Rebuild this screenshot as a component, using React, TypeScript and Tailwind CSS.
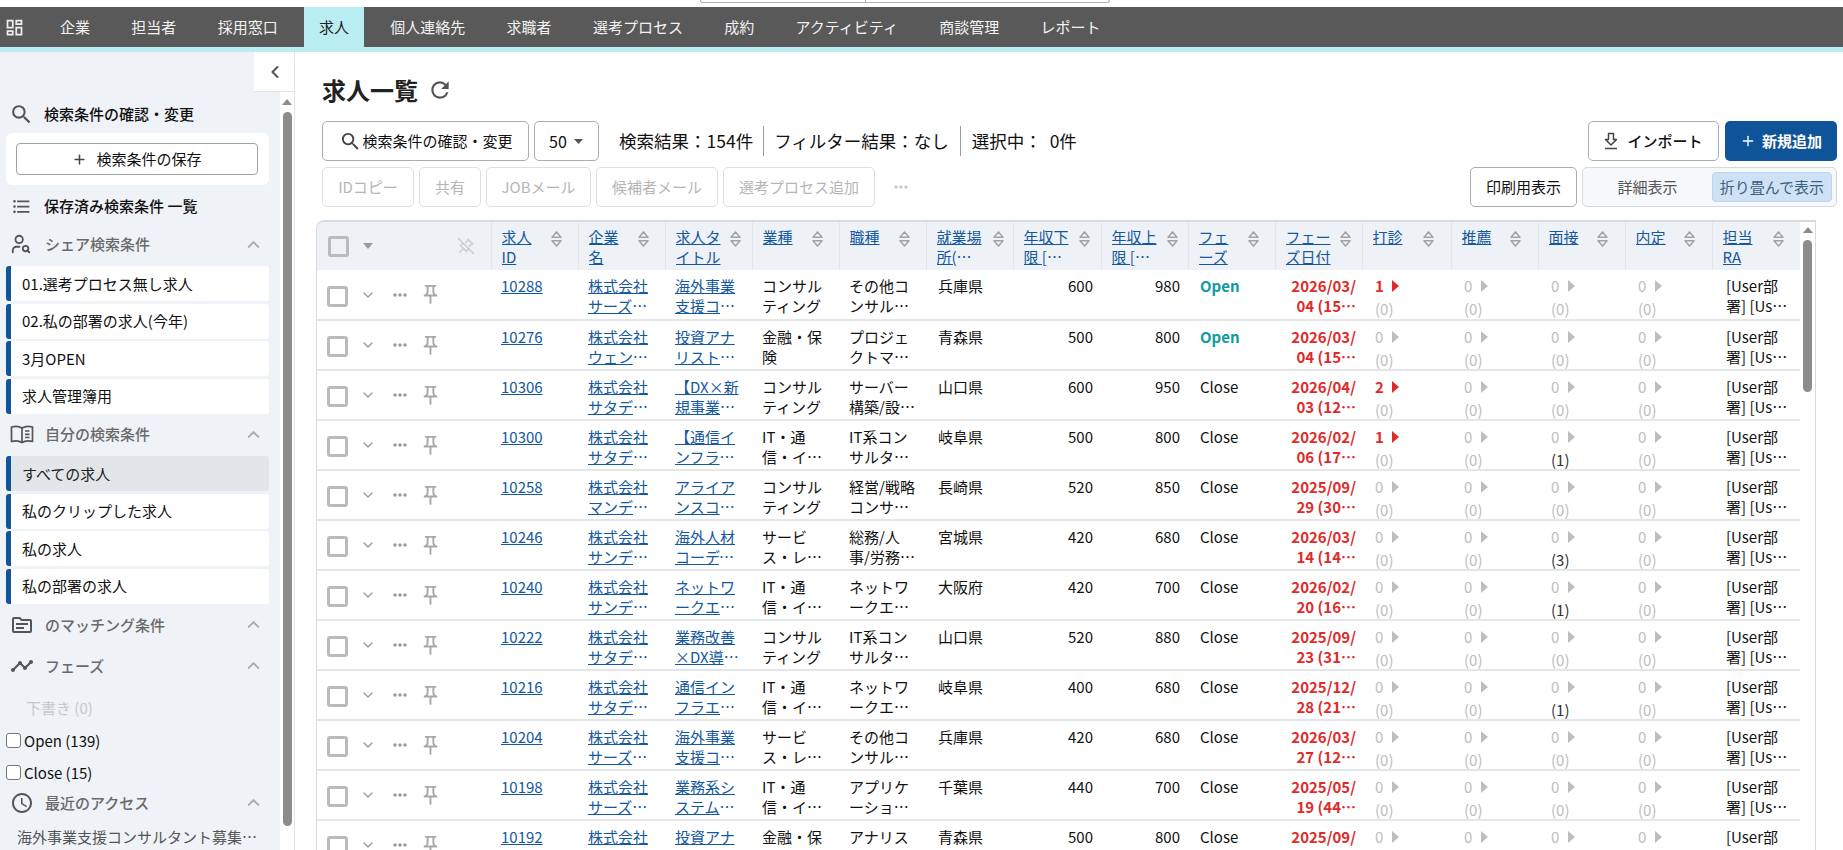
import { Plus, ChevronUp, ChevronDown, ChevronLeft, UserSearch } from "lucide-react";
import { MdOutlineDashboard, MdOutlineSource, MdOutlineTimeline, MdOutlineAccessTime, MdRefresh, MdOutlinePushPin, MdMoreHoriz, MdFormatListBulleted, MdSearch } from "react-icons/md";
import { TbPinnedOff } from "react-icons/tb";

const navItems = ["企業", "担当者", "採用窓口", "求人", "個人連絡先", "求職者", "選考プロセス", "成約", "アクティビティ", "商談管理", "レポート"];

type Row = { id: string; co: string; title: string; ind: string; job: string; pref: string; min: string; max: string; phase: string; date: string; da: string; men: string };

const rows: Row[] = [
  { id: "10288", co: "株式会社サーズデイテクノロジー", title: "海外事業支援コンサルタント募集中", ind: "コンサルティング", job: "その他コンサルタント職", pref: "兵庫県", min: "600", max: "980", phase: "Open", date: "2026/03/04 (15日前)", da: "1", men: "0" },
  { id: "10276", co: "株式会社ウェンズデイ総合研究所", title: "投資アナリスト候補の募集です", ind: "金融・保険", job: "プロジェクトマネージャー", pref: "青森県", min: "500", max: "800", phase: "Open", date: "2026/03/04 (15日前)", da: "0", men: "0" },
  { id: "10306", co: "株式会社サタデーデジタル研究所", title: "【DX×新規事業推進】担当者募集", ind: "コンサルティング", job: "サーバー構築/設計担当者", pref: "山口県", min: "600", max: "950", phase: "Close", date: "2026/04/03 (12日前)", da: "2", men: "0" },
  { id: "10300", co: "株式会社サタデーデジタル研究所", title: "【通信インフラ】設計担当者募集", ind: "IT・通信・インフラ業界", job: "IT系コンサルタント職種", pref: "岐阜県", min: "500", max: "800", phase: "Close", date: "2026/02/06 (17日前)", da: "1", men: "1" },
  { id: "10258", co: "株式会社マンデーデジタル研究所", title: "アライアンスコーディネーター", ind: "コンサルティング", job: "経営/戦略コンサルタント職", pref: "長崎県", min: "520", max: "850", phase: "Close", date: "2025/09/29 (30日前)", da: "0", men: "0" },
  { id: "10246", co: "株式会社サンデーデジタル研究所", title: "海外人材コーディネーター職種", ind: "サービス・レジャー業界", job: "総務/人事/労務担当者職", pref: "宮城県", min: "420", max: "680", phase: "Close", date: "2026/03/14 (14日前)", da: "0", men: "3" },
  { id: "10240", co: "株式会社サンデーデジタル研究所", title: "ネットワークエンジニア募集中", ind: "IT・通信・インフラ業界", job: "ネットワークエンジニア職", pref: "大阪府", min: "420", max: "700", phase: "Close", date: "2026/02/20 (16日前)", da: "0", men: "1" },
  { id: "10222", co: "株式会社サタデーデジタル研究所", title: "業務改善×DX導入コンサルタント", ind: "コンサルティング", job: "IT系コンサルタント職種", pref: "山口県", min: "520", max: "880", phase: "Close", date: "2025/09/23 (31日前)", da: "0", men: "0" },
  { id: "10216", co: "株式会社サタデーデジタル研究所", title: "通信インフラエンジニア募集中", ind: "IT・通信・インフラ業界", job: "ネットワークエンジニア職", pref: "岐阜県", min: "400", max: "680", phase: "Close", date: "2025/12/28 (21日前)", da: "0", men: "1" },
  { id: "10204", co: "株式会社サーズデイテクノロジー", title: "海外事業支援コンサルタント募集", ind: "サービス・レジャー業界", job: "その他コンサルタント職", pref: "兵庫県", min: "420", max: "680", phase: "Close", date: "2026/03/27 (12日前)", da: "0", men: "0" },
  { id: "10198", co: "株式会社サーズデイテクノロジー", title: "業務系システムエンジニア募集", ind: "IT・通信・インフラ業界", job: "アプリケーションエンジニア", pref: "千葉県", min: "440", max: "700", phase: "Close", date: "2025/05/19 (44日前)", da: "0", men: "0" },
  { id: "10192", co: "株式会社ウェンズデイ総合研究所", title: "投資アナリスト候補の募集です", ind: "金融・保険", job: "アナリスト候補の募集職", pref: "青森県", min: "500", max: "800", phase: "Close", date: "2025/09/10 (30日前)", da: "0", men: "0" },
];

const headers = [
  { t: "求人\nID", w: "w-[44px]", col: "w-[87px]" },
  { t: "企業名", w: "w-[44px]", col: "w-[87px]" },
  { t: "求人タイトル", w: "w-[49px]", col: "w-[87px]" },
  { t: "業種", w: "w-[44px]", col: "w-[87px]" },
  { t: "職種", w: "w-[44px]", col: "w-[87px]" },
  { t: "就業場所(都道府県)", w: "w-[49px] mr-[2px]", col: "w-[87px]" },
  { t: "年収下限 [万円]", w: "w-[50px]", col: "w-[88px]" },
  { t: "年収上限 [万円]", w: "w-[50px]", col: "w-[87px]" },
  { t: "フェーズ", w: "w-[44px]", col: "w-[87px]" },
  { t: "フェーズ日付", w: "w-[49px]", col: "w-[87px]" },
  { t: "打診", w: "w-[45px]", col: "w-[89px]" },
  { t: "推薦", w: "w-[43px]", col: "w-[87px]" },
  { t: "面接", w: "w-[43px]", col: "w-[87px]" },
  { t: "内定", w: "w-[43px]", col: "w-[87px]" },
  { t: "担当\nRA", w: "w-[45px]", col: "w-[88px]" },
];

function SortIcon() {
  return (
    <svg width="11" height="16" viewBox="0 0 11 16" fill="none" stroke="#a3a3a3" strokeWidth="1.5" className="shrink-0 mt-[4px]">
      <path d="M5.5 1 L10 6.3 H1 Z" strokeLinejoin="round" />
      <path d="M5.5 15 L10 9.7 H1 Z" strokeLinejoin="round" />
    </svg>
  );
}

function Tri({ cls }: { cls: string }) {
  return (
    <svg width="7" height="12" viewBox="0 0 7 12" className={cls}>
      <path d="M0 0 L7 6 L0 12 Z" fill="currentColor" />
    </svg>
  );
}

function Count({ n, sub = "0" }: { n: string; sub?: string }) {
  const hot = n !== "0";
  return (
    <td className="align-top pl-[13px] pt-[6px] border-b-2 border-[#e4e6e8]">
      <div className={hot ? "flex items-center h-[20px] text-[#e02a2a] font-bold" : "flex items-center h-[20px] text-[#bdbdbd]"}>
        <span className="w-[9px]">{n}</span>
        <Tri cls="ml-[8px]" />
      </div>
      <div className={sub !== "0" ? "mt-[3px] h-[18px] leading-[20px] text-[#333]" : "mt-[3px] h-[18px] leading-[20px] text-[#bdbdbd]"}>({sub})</div>
    </td>
  );
}

function Clamp({ children, link }: { children: string; link?: boolean }) {
  return (
    <div className={link ? "line-clamp-2 break-all text-[#14589f] underline" : "line-clamp-2 break-all"}>{children}</div>
  );
}

function SideItem({ label, active }: { label: string; active?: boolean }) {
  return (
    <div className={active ? "h-[35px] flex items-center pl-[11px] border-l-[5px] border-[#10549a] rounded-[3px] bg-[#e3e6e9] text-[#222]" : "h-[35px] flex items-center pl-[11px] border-l-[5px] border-[#10549a] rounded-[3px] bg-white text-[#111]"}>
      {label}
    </div>
  );
}

function SideHead({ icon, label, mt }: { icon: React.ReactNode; label: string; mt: string }) {
  return (
    <div className={`flex items-center h-[24px] pl-[10px] pr-[17px] text-[#6a6a6a] ${mt}`}>
      <span className="w-[25px] flex justify-start text-[#555]">{icon}</span>
      <span className="ml-[10px] flex-1 font-medium">{label}</span>
      <ChevronUp size={19} strokeWidth={2.4} className="text-[#a9a9a9]" />
    </div>
  );
}

function BookIcon() {
  return (
    <svg width="24" height="24" viewBox="0 0 24 24" fill="none" stroke="currentColor" strokeWidth="1.7" strokeLinejoin="round">
      <path d="M1.5 5 C5 4 9 4 12 6 C15 4 19 4 22.5 5 V19.5 C19 18.5 15 18.5 12 20.5 C9 18.5 5 18.5 1.5 19.5 Z" />
      <path d="M12 6 V20.5" />
      <path d="M15 9 H19.5 M15 12.3 H19.5 M15 15.5 H19.5" />
    </svg>
  );
}

export default function App() {
  return (
    <div lang="ja" className="h-[850px] w-[1843px] overflow-hidden bg-white flex flex-col text-[15px] leading-[20px] text-[#111] font-['Noto_Sans_CJK_JP','Noto_Sans',sans-serif]">
      <div className="h-[7px] shrink-0 pl-[700px]">
        <div className="w-[410px] h-[3px] border-x border-b border-[#aab2bb] rounded-b-lg flex">
          <div className="w-[165px] border-r border-[#aab2bb]" />
        </div>
      </div>

      <header className="h-[45px] shrink-0 flex bg-[#595959] border-b-[5px] border-[#b9edf1] text-[#f2f2f2]">
        <div className="w-[45px] pl-[4px] flex items-center"><MdOutlineDashboard size={21} className="text-[#eee]" /></div>
        <nav className="flex gap-[11.3px]">
          {navItems.map((n) =>
            n === "求人" ? (
              <div key={n} className="px-[15px] h-[45px] pb-[5px] flex items-center bg-[#b9edf1] text-[#222]">{n}</div>
            ) : (
              <div key={n} className="px-[15px] h-[40px] flex items-center">{n}</div>
            )
          )}
        </nav>
      </header>

      <div className="flex flex-1 min-h-0">
        <aside className="relative w-[295px] shrink-0 flex border-r border-[#e5e5e5]">
          <div className="w-[280px] bg-[#eff2f6] pt-[50px]">
            <div className="flex items-center h-[24px] pl-[9px] text-[#111] font-medium">
              <MdSearch size={25} className="text-[#555]" />
              <span className="ml-[10px]">検索条件の確認・変更</span>
            </div>
            <div className="mt-[7px] ml-[6px] w-[263px] h-[52px] bg-white rounded-[6px] pt-[10px] pl-[10px]">
              <div className="w-[242px] h-[32px] border border-[#9ea3a8] rounded-[4px] flex items-center justify-center text-[#111]">
                <Plus size={15} strokeWidth={2.4} className="text-[#444] mr-[9px]" />検索条件の保存
              </div>
            </div>
            <div className="flex items-center h-[24px] mt-[9px] pl-[11px] font-medium">
              <MdFormatListBulleted size={21} className="text-[#555]" />
              <span className="ml-[12px]">保存済み検索条件 一覧</span>
            </div>
            <SideHead mt="mt-[14px]" label="シェア検索条件" icon={<UserSearch size={22} />} />
            <div className="mt-[10px] ml-[6px] w-[263px] flex flex-col gap-[2.5px]">
              <SideItem label="01.選考プロセス無し求人" />
              <SideItem label="02.私の部署の求人(今年)" />
              <SideItem label="3月OPEN" />
              <SideItem label="求人管理簿用" />
            </div>
            <SideHead mt="mt-[8.5px]" label="自分の検索条件" icon={<BookIcon />} />
            <div className="mt-[10px] ml-[6px] w-[263px] flex flex-col gap-[2.5px]">
              <SideItem label="すべての求人" active />
              <SideItem label="私のクリップした求人" />
              <SideItem label="私の求人" />
              <SideItem label="私の部署の求人" />
            </div>
            <SideHead mt="mt-[9px]" label="のマッチング条件" icon={<MdOutlineSource size={24} />} />
            <SideHead mt="mt-[17px]" label="フェーズ" icon={<MdOutlineTimeline size={24} />} />
            <div className="mt-[20px] pl-[26px] text-[#c6c8ca]">下書き (0)</div>
            <div className="mt-[13px] flex items-center pl-[6px]">
              <span className="w-[15px] h-[15px] border border-[#777] rounded-[3px] bg-white mr-[3px]" />Open (139)
            </div>
            <div className="mt-[12px] flex items-center pl-[6px]">
              <span className="w-[15px] h-[15px] border border-[#777] rounded-[3px] bg-white mr-[3px]" />Close (15)
            </div>
            <SideHead mt="mt-[8px]" label="最近のアクセス" icon={<MdOutlineAccessTime size={24} />} />
            <div className="mt-[12px] pl-[17px] pr-[22px] truncate text-[#555]">海外事業支援コンサルタント募集中の求人</div>
          </div>
          <div className="w-[14px] bg-white pt-[47px] flex flex-col items-center">
            <svg width="10" height="6" viewBox="0 0 10 6"><path d="M5 0 L10 6 H0 Z" fill="#8c8c8c" /></svg>
            <div className="mt-[7px] w-[9px] h-[714px] rounded-[5px] bg-[#8c8c8c]" />
          </div>
          <div className="absolute top-0 right-0 w-[40px] h-[40px] pl-[1px] bg-white flex items-center justify-center border-b border-[#e5e5e5]">
            <ChevronLeft size={20} strokeWidth={2.5} className="text-[#555]" />
          </div>
        </aside>

        <main className="flex-1 min-w-0 flex flex-col">
          <div className="pl-[27px] pr-[6px]">
            <div className="h-[69px] flex items-center pt-[7px]">
              <h1 className="text-[24px] leading-[32px] font-bold text-[#222]">求人一覧</h1>
              <MdRefresh size={26} className="ml-[9px] text-[#555]" />
            </div>
            <div className="flex h-[40px] items-center">
              <div className="h-[40px] w-[207px] border border-[#a9aeb3] rounded-[5px] flex items-center justify-center text-[#111]">
                <MdSearch size={23} className="text-[#444] ml-[1px]" />検索条件の確認・変更
              </div>
              <div className="ml-[5px] h-[40px] w-[65px] border border-[#a9aeb3] rounded-[5px] flex items-center pl-[14px] text-[16px]">
                50
                <svg width="9" height="5" viewBox="0 0 9 5" className="ml-[7px]"><path d="M0 0 H9 L4.5 5 Z" fill="#555" /></svg>
              </div>
              <div className="ml-[20px] flex items-center text-[17.5px] text-[#111]">
                <span>検索結果：154件</span>
                <span className="mx-[10px] h-[30px] border-l border-[#999]" />
                <span>フィルター結果：なし</span>
                <span className="mx-[11px] h-[30px] border-l border-[#999]" />
                <span>選択中：&nbsp; 0件</span>
              </div>
              <div className="ml-auto flex gap-[6px]">
                <div className="w-[131px] h-[40px] border border-[#a9aeb3] rounded-[5px] flex items-center justify-center font-medium">
                  <svg width="14" height="18" viewBox="0 0 14 18" fill="none" stroke="#444" strokeWidth="1.5" className="mr-[9px]">
                    <path d="M4.5 1.5 H9.5 V7.5 H12.5 L7 13 L1.5 7.5 H4.5 Z" strokeLinejoin="round" />
                    <path d="M1 16.5 H13" />
                  </svg>
                  インポート
                </div>
                <div className="w-[112px] h-[40px] bg-[#0f5499] rounded-[5px] flex items-center justify-center text-white font-bold">
                  <Plus size={16} className="mr-[6px]" />新規追加
                </div>
              </div>
            </div>
            <div className="flex h-[40px] mt-[6px] items-center">
              {[
                { t: "IDコピー", w: "w-[92px]" },
                { t: "共有", w: "w-[62px]" },
                { t: "JOBメール", w: "w-[105px]" },
                { t: "候補者メール", w: "w-[122px]" },
                { t: "選考プロセス追加", w: "w-[152px]" },
              ].map((b) => (
                <div key={b.t} className={`${b.w} mr-[5px] h-[40px] border border-[#dde0e3] rounded-[5px] flex items-center justify-center text-[#b6b6b6]`}>{b.t}</div>
              ))}
              <MdMoreHoriz size={20} className="ml-[11px] text-[#c9c9c9]" />
              <div className="ml-auto flex gap-[5px]">
                <div className="w-[107px] h-[40px] border border-[#a9aeb3] rounded-[5px] flex items-center justify-center text-[#111]">印刷用表示</div>
                <div className="w-[255px] h-[40px] border border-[#d5d8dc] rounded-[5px] bg-[#f7f8fa] flex items-center pr-[4px]">
                  <div className="flex-1 text-center text-[#555]">詳細表示</div>
                  <div className="w-[120px] h-[30px] rounded-[4px] bg-[#cfe2f5] border border-[#b9d5ef] flex items-center justify-center text-[#3e5f80]">折り畳んで表示</div>
                </div>
              </div>
            </div>
          </div>

          <div className="mt-[13px] ml-[21px] w-[1500px] flex-1 min-h-0 overflow-hidden flex border-l border-r border-t-2 border-[#d8dbde] rounded-tl-[8px]">
            <table className="w-[1483px] table-fixed shrink-0 self-start">
              <colgroup>
                <col className="w-[174px]" />
                {headers.map((h) => <col key={h.t} className={h.col} />)}
              </colgroup>
              <thead>
                <tr className="bg-[#eef1f5]">
                  <th className="h-[48px] p-0 font-normal border-r border-[#e2e5e9]">
                    <div className="flex items-center h-[48px] pl-[11px]">
                      <span className="w-[21px] h-[21px] border-[3px] border-[#bbb] rounded-[3px]" />
                      <svg width="10" height="6" viewBox="0 0 10 6" className="ml-[14px]"><path d="M0 0 H10 L5 6 Z" fill="#999" /></svg>
                      <TbPinnedOff size={20} className="ml-[83px] text-[#d0d0d0]" />
                    </div>
                  </th>
                  {headers.map((h, i) => (
                    <th key={h.t} className={i === headers.length - 1 ? "h-[48px] p-0 align-top font-normal" : "h-[48px] p-0 align-top font-normal border-r border-[#e2e5e9]"}>
                      <div className="flex pl-[10px] pt-[5px] text-left">
                        <div className={`${h.w} shrink-0`}>
                          <div className="line-clamp-2 break-all whitespace-pre-line text-[#14589f] underline">{h.t}</div>
                        </div>
                        <div className="ml-[5px]"><SortIcon /></div>
                      </div>
                    </th>
                  ))}
                </tr>
              </thead>
              <tbody>
                {rows.map((r) => (
                  <tr key={r.id} className="h-[50px]">
                    <td className="h-[50px] p-0 border-b-2 border-[#e4e6e8]">
                      <div className="flex items-center h-[48px] pl-[10px]">
                        <span className="w-[21px] h-[21px] border-[3px] border-[#bbb] rounded-[3px] mt-[3px]" />
                        <ChevronDown size={16} strokeWidth={2} className="ml-[12px] text-[#999]" />
                        <MdMoreHoriz size={20} className="ml-[14px] text-[#999]" />
                        <MdOutlinePushPin size={23} className="ml-[9px] text-[#a8a8a8]" />
                      </div>
                    </td>
                    <td className="align-top pl-[10px] pr-[8px] pt-[6px] border-b-2 border-[#e4e6e8]"><Clamp link>{r.id}</Clamp></td>
                    <td className="align-top pl-[10px] pr-[8px] pt-[6px] border-b-2 border-[#e4e6e8]"><Clamp link>{r.co}</Clamp></td>
                    <td className="align-top pl-[10px] pr-[8px] pt-[6px] border-b-2 border-[#e4e6e8]"><Clamp link>{r.title}</Clamp></td>
                    <td className="align-top pl-[10px] pr-[8px] pt-[6px] border-b-2 border-[#e4e6e8]"><Clamp>{r.ind}</Clamp></td>
                    <td className="align-top pl-[10px] pr-[8px] pt-[6px] border-b-2 border-[#e4e6e8]"><Clamp>{r.job}</Clamp></td>
                    <td className="align-top pl-[12px] pr-[8px] pt-[6px] border-b-2 border-[#e4e6e8]"><Clamp>{r.pref}</Clamp></td>
                    <td className="align-top pl-[10px] pr-[8px] pt-[6px] border-b-2 border-[#e4e6e8] text-right">{r.min}</td>
                    <td className="align-top pl-[10px] pr-[8px] pt-[6px] border-b-2 border-[#e4e6e8] text-right">{r.max}</td>
                    <td className={r.phase === "Open" ? "align-top pl-[12px] pt-[6px] border-b-2 border-[#e4e6e8] font-bold text-[#0e9ba1]" : "align-top pl-[12px] pt-[6px] border-b-2 border-[#e4e6e8]"}>{r.phase}</td>
                    <td className="align-top pl-[10px] pr-[6px] pt-[6px] border-b-2 border-[#e4e6e8] text-right font-bold text-[#e02a2a]">
                      <div className="line-clamp-2 break-all">{r.date}</div>
                    </td>
                    <Count n={r.da} />
                    <Count n="0" />
                    <Count n="0" sub={r.men} />
                    <Count n="0" />
                    <td className="align-top pl-[14px] pr-[8px] pt-[6px] border-b-2 border-[#e4e6e8]">
                      <div className="line-clamp-2 break-all">[User部署] [User部署] [User名]</div>
                    </td>
                  </tr>
                ))}
              </tbody>
            </table>
            <div className="flex-1 flex flex-col items-center pt-[5px]">
              <svg width="10" height="6" viewBox="0 0 10 6"><path d="M5 0 L10 6 H0 Z" fill="#8c8c8c" /></svg>
              <div className="mt-[7px] w-[9px] h-[152px] rounded-[5px] bg-[#8c8c8c]" />
            </div>
          </div>
        </main>
      </div>
    </div>
  );
}
